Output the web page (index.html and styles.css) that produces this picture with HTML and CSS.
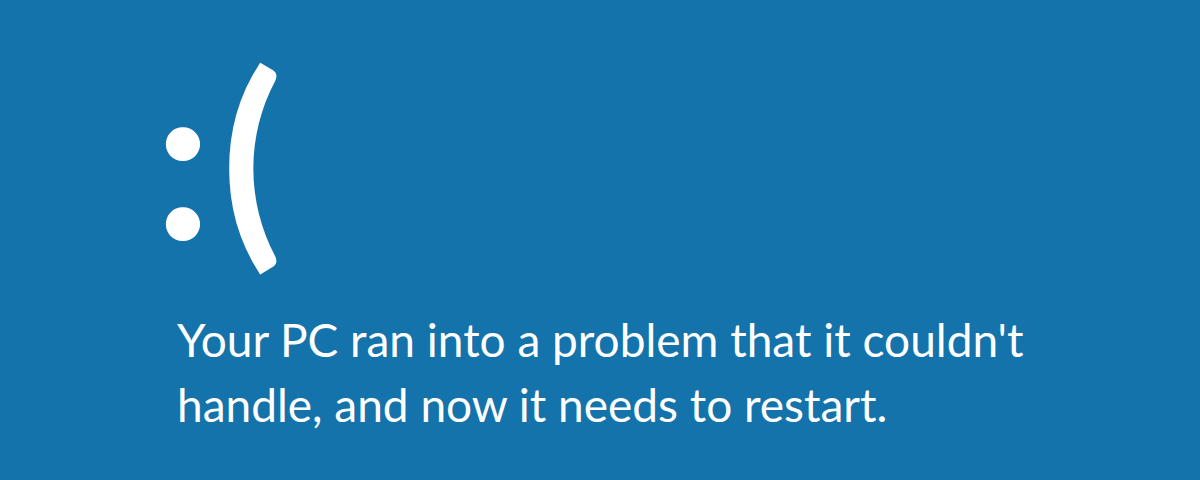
FILE: index.html
```html
<!DOCTYPE html>
<html lang="en">
<head>
<meta charset="utf-8">
<title>Your PC ran into a problem</title>
<link rel="stylesheet" href="styles.css">
</head>
<body>
<main class="screen">
  <div class="face">:(</div>
  <p class="message">Your PC ran into a problem that it couldn't handle, and now it needs to restart.</p>
</main>
</body>
</html>
```
FILE: styles.css
```css
html, body {
  margin: 0;
  height: 100%;
  background: #1473ab;
}
.screen {
  height: 480px;
  box-sizing: border-box;
  padding: 22px 0 0 154px;
  color: #ffffff;
  font-family: "Lato", "Open Sans", sans-serif;
}
.face {
  font-size: 225px;
  font-weight: 700;
  line-height: 260px;
  letter-spacing: 9px;
  margin: 0;
}
.message {
  margin: 25px 0 0 23px;
  max-width: 880px;
  font-size: 46px;
  font-weight: 400;
  line-height: 65px;
}
```
